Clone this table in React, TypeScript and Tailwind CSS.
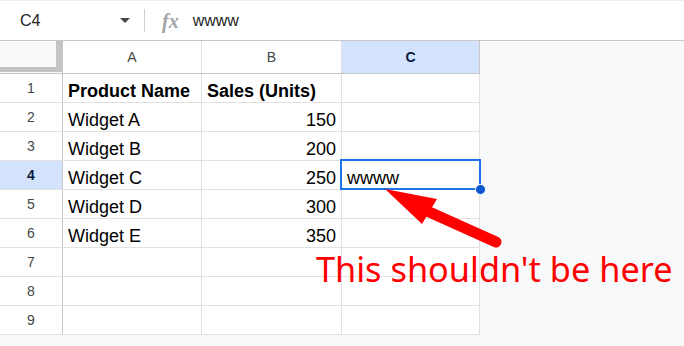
import { ReactNode } from 'react'

const rows: Array<{ name: string; sales: string }> = [
  { name: 'Product Name', sales: 'Sales (Units)' },
  { name: 'Widget A', sales: '150' },
  { name: 'Widget B', sales: '200' },
  { name: 'Widget C', sales: '250' },
  { name: 'Widget D', sales: '300' },
  { name: 'Widget E', sales: '350' },
  { name: '', sales: '' },
  { name: '', sales: '' },
  { name: '', sales: '' }
]

function Cell({ className, children }: { className: string; children?: ReactNode }) {
  return (
    <div className={`flex h-full items-end border-r border-[#e1e1e1] pb-[2px] leading-none ${className}`}>
      {children}
    </div>
  )
}

export default function App() {
  return (
    <div
      className="relative h-[346px] w-[684px] overflow-hidden bg-[#f8f9fa] text-black"
      style={{ fontFamily: '"Liberation Sans", Arial, sans-serif' }}
    >
      {/* formula bar */}
      <div className="flex h-[41px] items-center border-t border-b border-t-[#eeeeee] border-b-[#c7c7c7] bg-white">
        <span className="ml-[20px] w-[100px] text-[16px] text-[#1f1f1f]">C4</span>
        <span className="h-0 w-0 border-x-[5px] border-t-[5px] border-x-transparent border-t-[#444746]" />
        <span className="ml-[14px] h-[23px] w-px bg-[#d0d0d0]" />
        <span
          className="ml-[17px] text-[20px] font-bold italic text-[#a0a4a8]"
          style={{ fontFamily: '"Liberation Serif", serif' }}
        >
          fx
        </span>
        <span className="ml-[14px] text-[16px] text-[#1f1f1f]">wwww</span>
      </div>

      {/* sheet */}
      <div className="w-[480px] bg-white">
        <div className="flex h-[33px] border-b border-[#c7c7c7] text-[14px] text-[#444746]">
          <div className="h-full w-[63px] border-r border-[#c7c7c7] bg-[#f8f9fa]">
            <div className="h-[31px] w-[62px] border-r-[6px] border-b-[5px] border-[#c4c4c4]" />
          </div>
          <div className="flex w-[139px] items-center justify-center border-r border-[#e1e1e1]">A</div>
          <div className="flex w-[140px] items-center justify-center border-r border-[#e1e1e1]">B</div>
          <div className="flex w-[138px] items-center justify-center border-r border-[#c7c7c7] bg-[#d3e3fd] font-bold text-[#0a1a3a]">
            C
          </div>
        </div>

        {rows.map((r, i) => {
          const active = i === 3
          const head = i === 0
          return (
            <div key={i} className="flex h-[29px] border-b border-[#e1e1e1] text-[18px]">
              <div
                className={`flex h-full w-[63px] items-center justify-center border-r border-[#c7c7c7] text-[14px] ${
                  active ? 'bg-[#d3e3fd] font-bold text-[#0a1a3a]' : 'text-[#444746]'
                }`}
              >
                {i + 1}
              </div>
              <Cell className={`w-[139px] pl-[5px] ${head ? 'font-bold' : ''}`}>{r.name}</Cell>
              <Cell className={`w-[140px] ${head ? 'pl-[5px] font-bold' : 'justify-end pr-[5px]'}`}>
                {r.sales}
              </Cell>
              <Cell className="w-[138px] pl-[5px]">{active ? 'wwww' : ''}</Cell>
            </div>
          )
        })}
      </div>

      {/* selected cell C4 */}
      <div className="absolute left-[340px] top-[159px] h-[31px] w-[141px] border-2 border-[#1a73e8]" />
      <div className="absolute left-[475px] top-[184px] h-[11px] w-[11px] rounded-full border border-white bg-[#0b57d0]" />

      {/* annotation */}
      <svg className="absolute left-0 top-0" width="684" height="346" viewBox="0 0 684 346">
        <line x1="427" y1="211" x2="496" y2="242" stroke="#ff0000" strokeWidth="11" strokeLinecap="round" />
        <polygon points="385,189 437,199 422,224" fill="#ff0000" />
      </svg>
      <div
        className="absolute left-[316px] top-[252px] whitespace-nowrap text-[34.3px] leading-none text-[#ff0000]"
        style={{ fontFamily: '"Noto Sans", "Open Sans", sans-serif' }}
      >
        This shouldn't be here
      </div>
    </div>
  )
}
